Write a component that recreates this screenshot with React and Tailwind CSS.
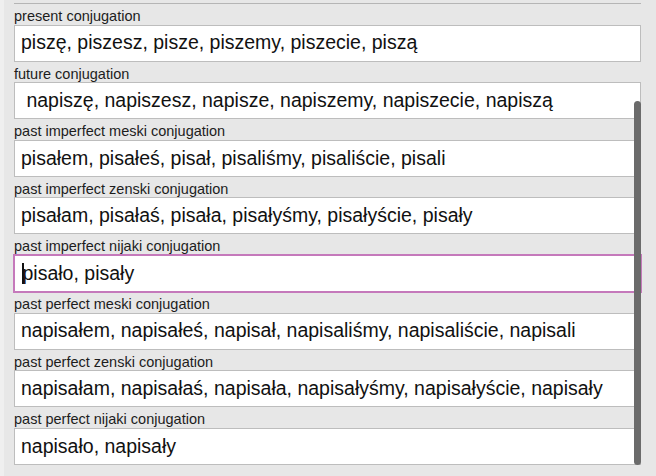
const rows = [
  { label: "present conjugation", value: "piszę, piszesz, pisze, piszemy, piszecie, piszą" },
  { label: "future conjugation", value: " napiszę, napiszesz, napisze, napiszemy, napiszecie, napiszą" },
  { label: "past imperfect meski conjugation", value: "pisałem, pisałeś, pisał, pisaliśmy, pisaliście, pisali" },
  { label: "past imperfect zenski conjugation", value: "pisałam, pisałaś, pisała, pisałyśmy, pisałyście, pisały" },
  { label: "past imperfect nijaki conjugation", value: "pisało, pisały", focused: true },
  { label: "past perfect meski conjugation", value: "napisałem, napisałeś, napisał, napisaliśmy, napisaliście, napisali" },
  { label: "past perfect zenski conjugation", value: "napisałam, napisałaś, napisała, napisałyśmy, napisałyście, napisały" },
  { label: "past perfect nijaki conjugation", value: "napisało, napisały" },
];

function Field({ label, value, focused }) {
  return (
    <div>
      <div className="flex h-[20.6px] items-end pb-[1px] text-[14.5px] leading-none text-[#1d1d1d]">{label}</div>
      <div
        className={
          focused
            ? "relative -mx-[1px] flex h-[39px] -my-[1px] items-center border-2 border-[#c579bb] bg-white pl-[7px] text-[19.5px] text-[#111]"
            : "flex h-[37px] items-center border border-[#bdbdbd] bg-white pl-[6px] text-[19.5px] text-[#111]"
        }
      >
        {focused ? <span className="mr-[-1px] inline-block h-[21px] w-[1.5px] bg-[#111]" /> : null}
        <span className="whitespace-pre">{value}</span>
      </div>
    </div>
  );
}

export default function App() {
  return (
    <div className="h-[476px] w-[656px] overflow-hidden bg-[#efefef] pl-[4px] font-['Liberation_Sans',Arial,sans-serif]">
      <div className="relative h-full bg-[#e7e7e7] pl-[10px] pr-[15px]">
        <div className="h-[4px] border-b border-[#b5b5b5]" />
        {rows.map((row) => (
          <Field key={row.label} {...row} />
        ))}
        <div className="absolute left-[630px] top-[101px] h-[364px] w-[7px] rounded-full bg-[#6b6b6b]" />
      </div>
    </div>
  );
}
